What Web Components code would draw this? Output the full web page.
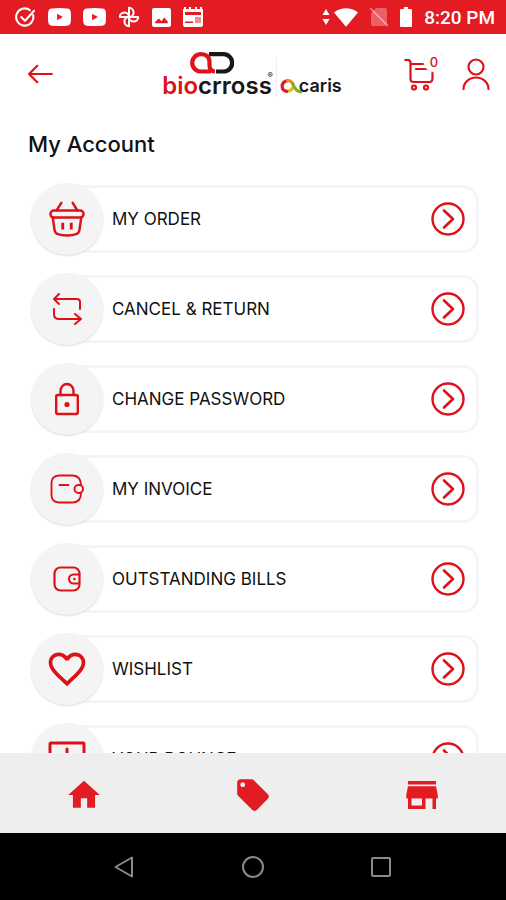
<!DOCTYPE html>
<html lang="en">
<head>
<meta charset="UTF-8">
<meta name="viewport" content="width=device-width, initial-scale=1.0">
<title>My Account</title>
<style>
    :root {
        --primary-color: #e31b23;
        --icon-color: #dd1218;
        --text-color: #111;
        --circle-color: #f4f4f4;
        --border-color: #f5f5f5;
        --nav-color: #eee;
    }
    body {
        margin: 0;
        height: 100vh;
        display: flex;
        flex-direction: column;
        background: #fff;
        color: var(--text-color);
        font-family: Inter, Roboto, sans-serif;
    }
</style>
</head>
<body>
<status-bar time="8:20 PM"></status-bar>
<app-header count="0"></app-header>
<account-page heading="My Account">
    <menu-row icon="basket">MY ORDER</menu-row>
    <menu-row icon="repeat">CANCEL &amp; RETURN</menu-row>
    <menu-row icon="lock">CHANGE PASSWORD</menu-row>
    <menu-row icon="invoice">MY INVOICE</menu-row>
    <menu-row icon="wallet">OUTSTANDING BILLS</menu-row>
    <menu-row icon="heart">WISHLIST</menu-row>
    <menu-row icon="gift">YOUR BOUNCE</menu-row>
</account-page>
<bottom-nav></bottom-nav>
<system-nav></system-nav>

<script>
// viewBox + markup for every icon, all drawn with currentColor
const line = 'fill="none" stroke="currentColor" stroke-linecap="round" stroke-linejoin="round"';
const icons = {
    check: ['0 0 22 22', `<g ${line} stroke-width="2.2"><path d="M19 8.5A9 9 0 1 1 15.500 3.200"/><path d="M6.500 10.500l4 4L20 4"/></g>`],
    video: ['0 0 24 18', '<path fill="currentColor" fill-rule="evenodd" d="M4 0Q12-.6 20 0Q23.500.2 23.800 4Q24.200 9 23.800 14Q23.500 17.800 20 18Q12 18.600 4 18Q.5 17.800.2 14Q-.2 9 .2 4Q.5.2 4 0zM9.500 5.500v7l6-3.500z"/>'],
    fan: ['0 0 24 24', `<g ${line} stroke-width="2.200"><path d="M12 12V2a5 5 0 0 1 0 10"/><path d="M12 12h10a5 5 0 0 1-10 0"/><path d="M12 12v10a5 5 0 0 1 0-10"/><path d="M12 12H2a5 5 0 0 1 10 0"/></g>`],
    image: ['0 0 18 18', '<path fill="currentColor" fill-rule="evenodd" d="M2 0h14q2 0 2 2v14q0 2-2 2H2q-2 0-2-2V2q0-2 2-2zM3 14.500h12V13l-3.500-4-2.500 3.500L6.500 10 3 13z"/>'],
    calendar: ['0 0 20 20', '<path fill="currentColor" fill-rule="evenodd" d="M0 2h1V0h2v2h3V0h2v2h4V0h2v2h3V0h2v2h1v16q0 2-2 2H2q-2 0-2-2zM2 5v3h16V5zM2 14.500V16h8v-1.500z"/><path fill="#e31b23" opacity=".5" d="M12 10h6v6h-6z"/>'],
    arrows: ['0 0 8 18', '<path fill="currentColor" d="M4 1l3.500 6h-7zM4 17L.5 11h7z"/>'],
    wifi: ['0 0 26 20', '<path fill="currentColor" d="M13 20L0 4.500Q13-4.500 26 4.500z"/>'],
    nosim: ['0 0 18 20', '<path fill="currentColor" opacity=".3" d="M6 1h9q2 0 2 2v14q0 2-2 2H3q-2 0-2-2V6z"/><path d="M0 1l18 18" stroke="currentColor" stroke-width="1.500" opacity=".5"/>'],
    battery: ['0 0 12 20', '<path fill="currentColor" d="M4 0h4v2h3q1 0 1 1v16q0 1-1 1H1q-1 0-1-1V3q0-1 1-1h3z"/>'],
    back: ['0 0 28 22', `<path ${line} stroke-width="2.400" d="M27 11H2M11 2l-9 9 9 9"/>`],
    cart: ['0 0 32 34', `<g ${line} stroke-width="2.200"><path d="M1.200 3H5l1.500 2v17q0 3 3 3h16q3 0 3-4V15"/><path d="M7 7h12M12 12h11"/><circle cx="10" cy="30.500" r="2"/><circle cx="22" cy="30.500" r="2"/></g>`],
    user: ['0 0 28 32', `<g ${line} stroke-width="2.200"><circle cx="14" cy="9" r="7.500"/><path d="M1.500 31a12.500 11.500 0 0 1 25 0"/></g>`],
    pill: ['1 0 44 24', `<g fill="none" stroke-width="4.200"><path stroke="#181818" d="M20 3.100h14.500a8.700 8.700 0 0 1 0 17.400H27"/><path stroke="#e0121b" d="M22 20.500H11.900a8.700 8.700 0 1 1 0-17.400q8.600 0 8.600 8v3q0 6.400 5.500 6.400"/></g>`],
    swirl: ['0 0 25 18', '<g fill="none" stroke-width="3.600" stroke-linecap="round"><path stroke="#e5b81c" d="M6 14.500Q11 16 14 11"/><path stroke="#d4202a" d="M7 15Q2 14 2 9.500Q2 4 8 3"/><path stroke="#f08a1c" d="M8 3Q11.500 2.500 14 6.500"/><path stroke="#7fae2b" d="M14 6.500Q17 15.500 23 15.500"/></g>'],
    basket: ['0 0 38 38', `<g ${line} stroke-width="2.600"><path d="M13 2L8 10M25 2l5 8"/><rect x="1.500" y="10" width="35" height="7.500" rx="3.700"/><path d="M4 18l2 13.500q1 5 13 5t13-5L34 18"/><path stroke-width="3" d="M14.500 23v7M23.500 23v7" stroke-linecap="butt"/></g>`],
    repeat: ['0 0 30 34', `<path ${line} stroke-width="2" d="M7 2L2 7l5 5M2 7h23q3 0 3 3v7M23 22l6 5-6 5M28 27H7q-5 0-5-5v-5"/>`],
    lock: ['0 0 24 34', `<g ${line} stroke-width="2.400"><rect x="1.200" y="13" width="21.600" height="19" rx="1.500"/><path d="M5.500 13V9a6.500 7 0 0 1 13 0v4"/></g><circle cx="12" cy="22.500" r="2.600" fill="currentColor"/>`],
    invoice: ['0 0 34 30', `<g ${line} stroke-width="1.900"><path d="M31 10.500Q30.500 2 23 1.500H9Q1.500 2 1.500 9v12Q1.500 28 9 28.500h14q8-.5 8-9.500"/><rect x="24.500" y="11" width="8.500" height="8" rx="4"/><path d="M9.500 11h9"/></g>`],
    wallet: ['0 0 28 26', `<g ${line} stroke-width="2.200"><rect x="1.500" y="1.500" width="25" height="23" rx="6"/><path d="M26 8.500h-5.500a4.500 4.500 0 0 0 0 9H26"/></g><circle cx="21.500" cy="13" r="1.300" fill="currentColor"/>`],
    heart: ['0 0 24 24', '<path fill="currentColor" d="M16.500 3c-1.740 0-3.410.81-4.500 2.090C10.910 3.810 9.240 3 7.500 3 4.420 3 2 5.420 2 8.500c0 3.780 3.400 6.860 8.550 11.540L12 21.350l1.450-1.320C18.600 15.360 22 12.280 22 8.500 22 5.420 19.580 3 16.500 3zm-4.400 15.550l-.1.100-.1-.1C7.140 14.240 4 11.390 4 8.500 4 6.500 5.500 5 7.500 5c1.540 0 3.040.99 3.570 2.360h1.870C13.460 5.990 14.960 5 16.500 5c2 0 3.500 1.500 3.500 3.500 0 2.890-3.140 5.740-7.900 10.050z"/>'],
    gift: ['0 0 38 36', `<g ${line} stroke-width="3"><rect x="2" y="2" width="34" height="32" rx="1"/><path d="M19 8v26"/></g>`],
    next: ['0 0 34 34', `<g ${line} stroke-width="2.400"><circle cx="17" cy="17" r="15.500"/><path d="M13 8.500l9 8.500-9 8.500" stroke-width="2.600"/></g>`],
    home: ['0 0 24 24', '<path fill="currentColor" d="M10 20v-6h4v6h5v-8h3L12 3 2 12h3v8z"/>'],
    tag: ['0 0 24 24', '<path fill="currentColor" d="M21.410 11.580l-9-9C12.050 2.220 11.550 2 11 2H4c-1.100 0-2 .9-2 2v7c0 .55.22 1.050.59 1.420l9 9c.36.36.86.58 1.410.58s1.050-.22 1.410-.59l7-7c.37-.36.59-.86.59-1.410s-.23-1.060-.59-1.420zM5.500 7C4.670 7 4 6.330 4 5.500S4.670 4 5.500 4 7 4.670 7 5.500 6.330 7 5.500 7z"/>'],
    store: ['0 0 24 24', '<path fill="currentColor" d="M20 4H4v2h16V4zm1 10v-2l-1-5H4l-1 5v2h1v6h10v-6h4v6h2v-6h1zm-9 4H6v-4h6v4z"/>'],
    triangle: ['0 0 22 22', `<path ${line} stroke-width="2" d="M18 1.500v19L1.500 11z"/>`],
    circle: ['0 0 22 22', `<circle ${line} stroke-width="2" cx="11" cy="11" r="10"/>`],
    square: ['0 0 22 22', `<rect ${line} stroke-width="2" x="2" y="2" width="18" height="18" rx="1"/>`],
};

class AppIcon extends HTMLElement {
    constructor() {
        super();
        this.attachShadow({ mode: 'open' });
    }

    connectedCallback() {
        const [viewBox, markup] = icons[this.getAttribute('name')];
        const w = this.getAttribute('w') || 24;
        const h = this.getAttribute('h') || w;
        this.shadowRoot.innerHTML = `
            <style>
                :host { display: inline-flex; flex: none; }
                svg { display: block; }
            </style>
            <svg width="${w}" height="${h}" viewBox="${viewBox}" aria-hidden="true">${markup}</svg>
        `;
    }
}

class StatusBar extends HTMLElement {
    constructor() {
        super();
        this.attachShadow({ mode: 'open' });
    }

    connectedCallback() {
        this.shadowRoot.innerHTML = `
            <style>
                :host {
                    display: flex;
                    flex: none;
                    align-items: center;
                    justify-content: space-between;
                    height: 34px;
                    padding: 0 11px 0 15px;
                    background: var(--primary-color);
                    color: #fff;
                }
                div { display: flex; align-items: center; gap: 12px; }
                .net { gap: 4px; }
                time { font: 500 19px/24px Roboto, sans-serif; padding-top: 2px; }
            </style>
            <div>
                <app-icon name="check" w="21"></app-icon>
                <app-icon name="video" w="23" h="18"></app-icon>
                <app-icon name="video" w="23" h="18"></app-icon>
                <app-icon name="fan" w="22"></app-icon>
                <app-icon name="image" w="19"></app-icon>
                <app-icon name="calendar" w="20"></app-icon>
            </div>
            <div>
                <div class="net">
                    <app-icon name="arrows" w="8" h="18"></app-icon>
                    <app-icon name="wifi" w="24" h="19"></app-icon>
                </div>
                <app-icon name="nosim" w="18" h="20"></app-icon>
                <app-icon name="battery" w="12" h="20"></app-icon>
                <time>${this.getAttribute('time')}</time>
            </div>
        `;
    }
}

class AppHeader extends HTMLElement {
    constructor() {
        super();
        this.attachShadow({ mode: 'open' });
    }

    connectedCallback() {
        this.shadowRoot.innerHTML = `
            <style>
                :host {
                    display: grid;
                    grid-template-columns: 1fr auto 1fr;
                    flex: none;
                    align-items: center;
                    height: 80px;
                    padding: 0 16px 0 26px;
                    color: var(--icon-color);
                }
                button {
                    display: flex;
                    padding: 0;
                    border: 0;
                    background: none;
                    color: inherit;
                    position: relative;
                }
                .logo {
                    display: flex;
                    align-items: flex-end;
                    padding-right: 12px;
                    color: #181818;
                    text-decoration: none;
                }
                .brand {
                    display: flex;
                    flex-direction: column;
                    padding-right: 4px;
                }
                .brand app-icon { padding-left: 28px; }
                .name {
                    position: relative;
                    font: 600 24px/22px Inter, sans-serif;
                }
                .name b { font-weight: 600; color: #e0121b; }
                .name small {
                    position: absolute;
                    top: -4px;
                    right: -1px;
                    font-size: 8px;
                    line-height: 8px;
                }
                .partner {
                    display: flex;
                    align-items: flex-end;
                    height: 40px;
                    padding-left: 3px;
                    border-left: 1px solid #eee;
                    font: 600 18px/22px Inter, sans-serif;
                }
                .partner app-icon { margin: 0 -4px 3px 0; }
                .actions {
                    display: flex;
                    justify-content: flex-end;
                    align-items: center;
                    gap: 26px;
                }
                .badge {
                    position: absolute;
                    top: -5px;
                    right: -8px;
                    width: 20px;
                    height: 20px;
                    border-radius: 50%;
                    background: #fff;
                    box-shadow: 0 0 2px #ddd;
                    font: 500 13px/20px Inter, sans-serif;
                    text-align: center;
                }
            </style>
            <button type="button" aria-label="Back"><app-icon name="back" w="28" h="20"></app-icon></button>
            <a class="logo" href="#home">
                <span class="brand">
                    <app-icon name="pill" w="44" h="24"></app-icon>
                    <span class="name"><b>bio</b>crross<small>®</small></span>
                </span>
                <span class="partner"><app-icon name="swirl" w="23" h="16"></app-icon>caris</span>
            </a>
            <div class="actions">
                <button type="button" aria-label="Cart">
                    <app-icon name="cart" w="32" h="34"></app-icon>
                    <span class="badge">${this.getAttribute('count')}</span>
                </button>
                <button type="button" aria-label="Profile"><app-icon name="user" w="28" h="32"></app-icon></button>
            </div>
        `;
    }
}

class AccountPage extends HTMLElement {
    constructor() {
        super();
        this.attachShadow({ mode: 'open' });
    }

    connectedCallback() {
        this.shadowRoot.innerHTML = `
            <style>
                :host {
                    display: block;
                    flex: 1;
                    min-height: 0;
                    overflow-y: auto;
                    scrollbar-width: none;
                }
                h1 {
                    margin: 0;
                    padding: 16px 28px 25px;
                    font-size: 22px;
                    line-height: 28px;
                    font-weight: 500;
                }
                nav {
                    display: flex;
                    flex-direction: column;
                    gap: 18px;
                    padding: 0 27px 18px 31px;
                }
            </style>
            <h1>${this.getAttribute('heading')}</h1>
            <nav><slot></slot></nav>
        `;
    }
}

// [width, height] of each row icon inside its circle
const rowIconSize = {
    basket: [36, 36],
    repeat: [30, 34],
    lock: [26, 34],
    invoice: [34, 30],
    wallet: [28, 26],
    heart: [44, 44],
    gift: [38, 36],
};

class MenuRow extends HTMLElement {
    constructor() {
        super();
        this.attachShadow({ mode: 'open' });
    }

    connectedCallback() {
        const icon = this.getAttribute('icon');
        const [w, h] = rowIconSize[icon];
        this.shadowRoot.innerHTML = `
            <style>
                :host { display: block; }
                a {
                    display: flex;
                    align-items: center;
                    color: inherit;
                    text-decoration: none;
                }
                .circle {
                    display: flex;
                    flex: none;
                    align-items: center;
                    justify-content: center;
                    width: 72px;
                    height: 72px;
                    border-radius: 50%;
                    background: var(--circle-color);
                    box-shadow: 0 1px 2px #ddd;
                    color: var(--icon-color);
                    z-index: 1;
                }
                .card {
                    display: flex;
                    flex: 1;
                    align-items: center;
                    justify-content: space-between;
                    box-sizing: border-box;
                    height: 68px;
                    margin-left: -36px;
                    padding: 0 11px 0 42px;
                    border: 3px solid var(--border-color);
                    border-radius: 16px;
                    font-size: 17px;
                    line-height: 24px;
                }
                .card app-icon { color: var(--icon-color); }
            </style>
            <a href="#${icon}">
                <span class="circle"><app-icon name="${icon}" w="${w}" h="${h}"></app-icon></span>
                <span class="card">
                    <slot></slot>
                    <app-icon name="next" w="34"></app-icon>
                </span>
            </a>
        `;
    }
}

class BottomNav extends HTMLElement {
    constructor() {
        super();
        this.attachShadow({ mode: 'open' });
    }

    connectedCallback() {
        this.shadowRoot.innerHTML = `
            <style>
                :host {
                    display: grid;
                    grid-template-columns: repeat(3, 1fr);
                    flex: none;
                    box-sizing: border-box;
                    height: 80px;
                    padding-top: 3px;
                    background: var(--nav-color);
                }
                a {
                    display: flex;
                    align-items: center;
                    justify-content: center;
                    color: var(--primary-color);
                }
            </style>
            <a href="#home" aria-label="Home"><app-icon name="home" w="38"></app-icon></a>
            <a href="#offers" aria-label="Offers"><app-icon name="tag" w="38"></app-icon></a>
            <a href="#store" aria-label="Store"><app-icon name="store" w="42"></app-icon></a>
        `;
    }
}

class SystemNav extends HTMLElement {
    constructor() {
        super();
        this.attachShadow({ mode: 'open' });
    }

    connectedCallback() {
        this.shadowRoot.innerHTML = `
            <style>
                :host {
                    display: grid;
                    grid-template-columns: repeat(3, 1fr);
                    flex: none;
                    align-items: center;
                    justify-items: center;
                    height: 67px;
                    padding: 0 12%;
                    background: #000;
                }
                button {
                    display: flex;
                    padding: 0;
                    border: 0;
                    background: none;
                    color: #8a8a8a;
                }
            </style>
            <button type="button" aria-label="Back"><app-icon name="triangle" w="22"></app-icon></button>
            <button type="button" aria-label="Home"><app-icon name="circle" w="22"></app-icon></button>
            <button type="button" aria-label="Recents"><app-icon name="square" w="22"></app-icon></button>
        `;
    }
}

customElements.define('app-icon', AppIcon);
customElements.define('status-bar', StatusBar);
customElements.define('app-header', AppHeader);
customElements.define('account-page', AccountPage);
customElements.define('menu-row', MenuRow);
customElements.define('bottom-nav', BottomNav);
customElements.define('system-nav', SystemNav);
</script>
</body>
</html>
